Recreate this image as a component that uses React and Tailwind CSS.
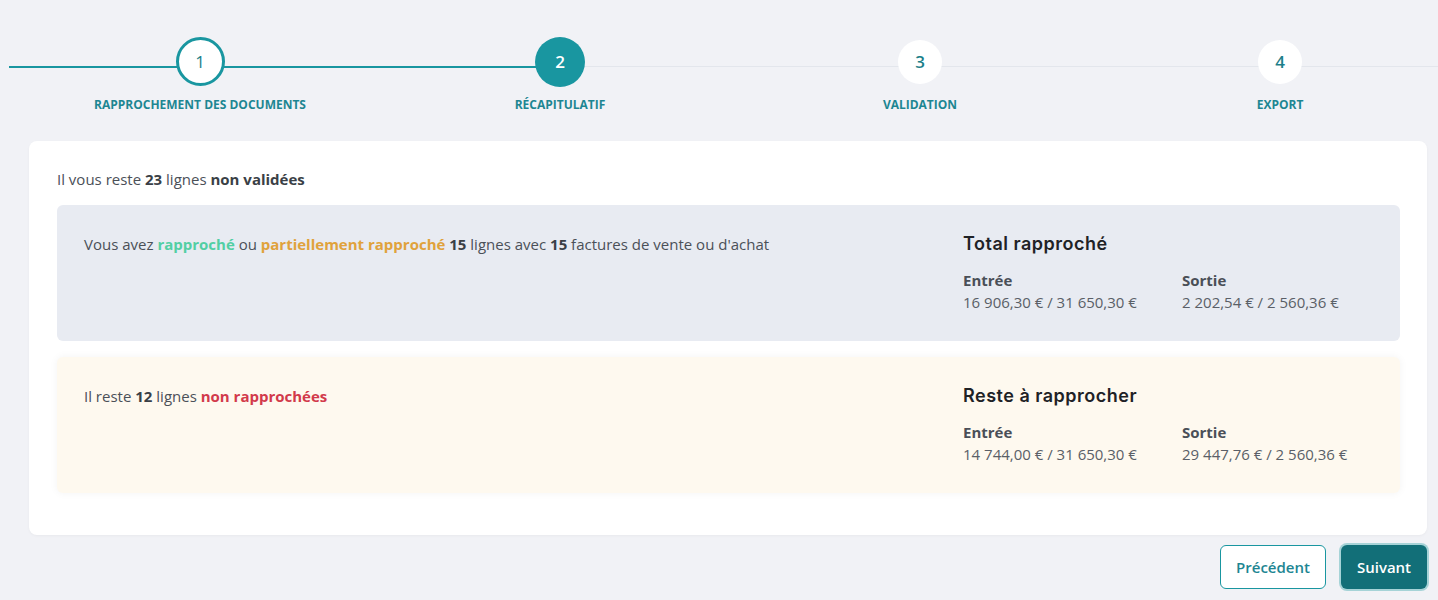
import React from "react";

const steps = [
	{ n: 1, label: "Rapprochement des documents", state: "done" },
	{ n: 2, label: "Récapitulatif", state: "current" },
	{ n: 3, label: "Validation", state: "todo" },
	{ n: 4, label: "Export", state: "todo" },
];

function StepCircle({ n, state }) {
	if (state === "current") {
		return <div className="flex h-[50px] w-[50px] items-center justify-center rounded-full bg-[#1996a0] text-[17px] font-semibold text-white">{n}</div>;
	}
	if (state === "done") {
		return <div className="flex h-[49px] w-[49px] items-center justify-center rounded-full border-[3px] border-[#1996a0] bg-white text-[17px] font-normal text-[#1d7f8a]">{n}</div>;
	}
	return <div className="mt-[3px] flex h-[44px] w-[44px] items-center justify-center rounded-full bg-white text-[17px] font-semibold text-[#1d7f8a]">{n}</div>;
}

function Amounts({ title, entree, sortie }) {
	return (
		<div className="w-[437px] shrink-0">
			<h3 className="font-['Inter',sans-serif] text-[18px] leading-[24px] font-semibold tracking-[0.5px] text-[#1f2226]">{title}</h3>
			<div className="mt-[13px] flex">
				<div className="w-[219px]">
					<p className="text-[15px] leading-[22px] font-bold text-[#4a4f57]">Entrée</p>
					<p className="text-[15px] leading-[22px] text-[#5a5f67]">{entree}</p>
				</div>
				<div>
					<p className="text-[15px] leading-[22px] font-bold text-[#4a4f57]">Sortie</p>
					<p className="text-[15px] leading-[22px] text-[#5a5f67]">{sortie}</p>
				</div>
			</div>
		</div>
	);
}

export default function App() {
	return (
		<div className="min-h-[600px] overflow-hidden bg-[#f1f2f6] font-['Open_Sans',sans-serif] text-[#4b5058]">
			{/* Stepper */}
			<div className="relative h-[141px]">
				<div className="absolute top-[66px] left-[9px] h-[2px] w-[552px] bg-[#1996a0]" />
				<div className="absolute top-[66px] right-0 left-[561px] h-px bg-[#e3e6ec]" />
				<div className="relative flex pt-[37px] pl-[20px]">
					{steps.map((s) => (
						<div key={s.n} className="flex w-[360px] shrink-0 flex-col items-center">
							<div className="flex h-[50px] items-start">
								<StepCircle n={s.n} state={s.state} />
							</div>
							<span className="mt-[11px] text-[12px] leading-[14px] font-bold text-[#1d8692] uppercase">{s.label}</span>
						</div>
					))}
				</div>
			</div>

			<div className="pr-[11px] pl-[29px]">
				{/* Card */}
				<div className="rounded-lg bg-white px-[28px] pt-[28px] pb-[42px] pr-[27px] shadow-[0_1px_3px_rgba(0,0,0,0.04)]">
					<p className="text-[15px] leading-[20px]">
						Il vous reste <b className="text-[#3a3f46]">23</b> lignes <b className="text-[#3a3f46]">non validées</b>
					</p>

					<div className="mt-[16px] flex rounded-md bg-[#e8ebf2] pt-[27px] pb-[28px] pl-[27px]">
						<p className="flex-1 text-[15px] leading-[24px]">
							Vous avez <b className="text-[#52cfa4]">rapproché</b> ou <b className="text-[#e0a23c]">partiellement rapproché</b> <b className="text-[#3a3f46]">15</b> lignes avec <b className="text-[#3a3f46]">15</b> factures de vente ou d'achat
						</p>
						<Amounts title="Total rapproché" entree="16 906,30 € / 31 650,30 €" sortie="2 202,54 € / 2 560,36 €" />
					</div>

					<div className="mt-[16px] flex rounded-md bg-[#fef9ef] pt-[27px] pb-[28px] pl-[27px] shadow-[0_0_8px_rgba(0,0,0,0.05)]">
						<p className="flex-1 text-[15px] leading-[24px]">
							Il reste <b className="text-[#3a3f46]">12</b> lignes <b className="text-[#d23a4b]">non rapprochées</b>
						</p>
						<Amounts title="Reste à rapprocher" entree="14 744,00 € / 31 650,30 €" sortie="29 447,76 € / 2 560,36 €" />
					</div>
				</div>

				{/* Actions */}
				<div className="mt-[10px] flex justify-end gap-[15px]">
					<button className="h-[44px] w-[106px] rounded-md border border-[#1996a0] bg-white text-[15px] font-semibold text-[#1d8692]">Précédent</button>
					<button className="h-[44px] w-[86px] rounded-md bg-[#126f78] text-[15px] font-semibold text-white ring-2 ring-[#a6d3d7]">Suivant</button>
				</div>
			</div>
		</div>
	);
}
